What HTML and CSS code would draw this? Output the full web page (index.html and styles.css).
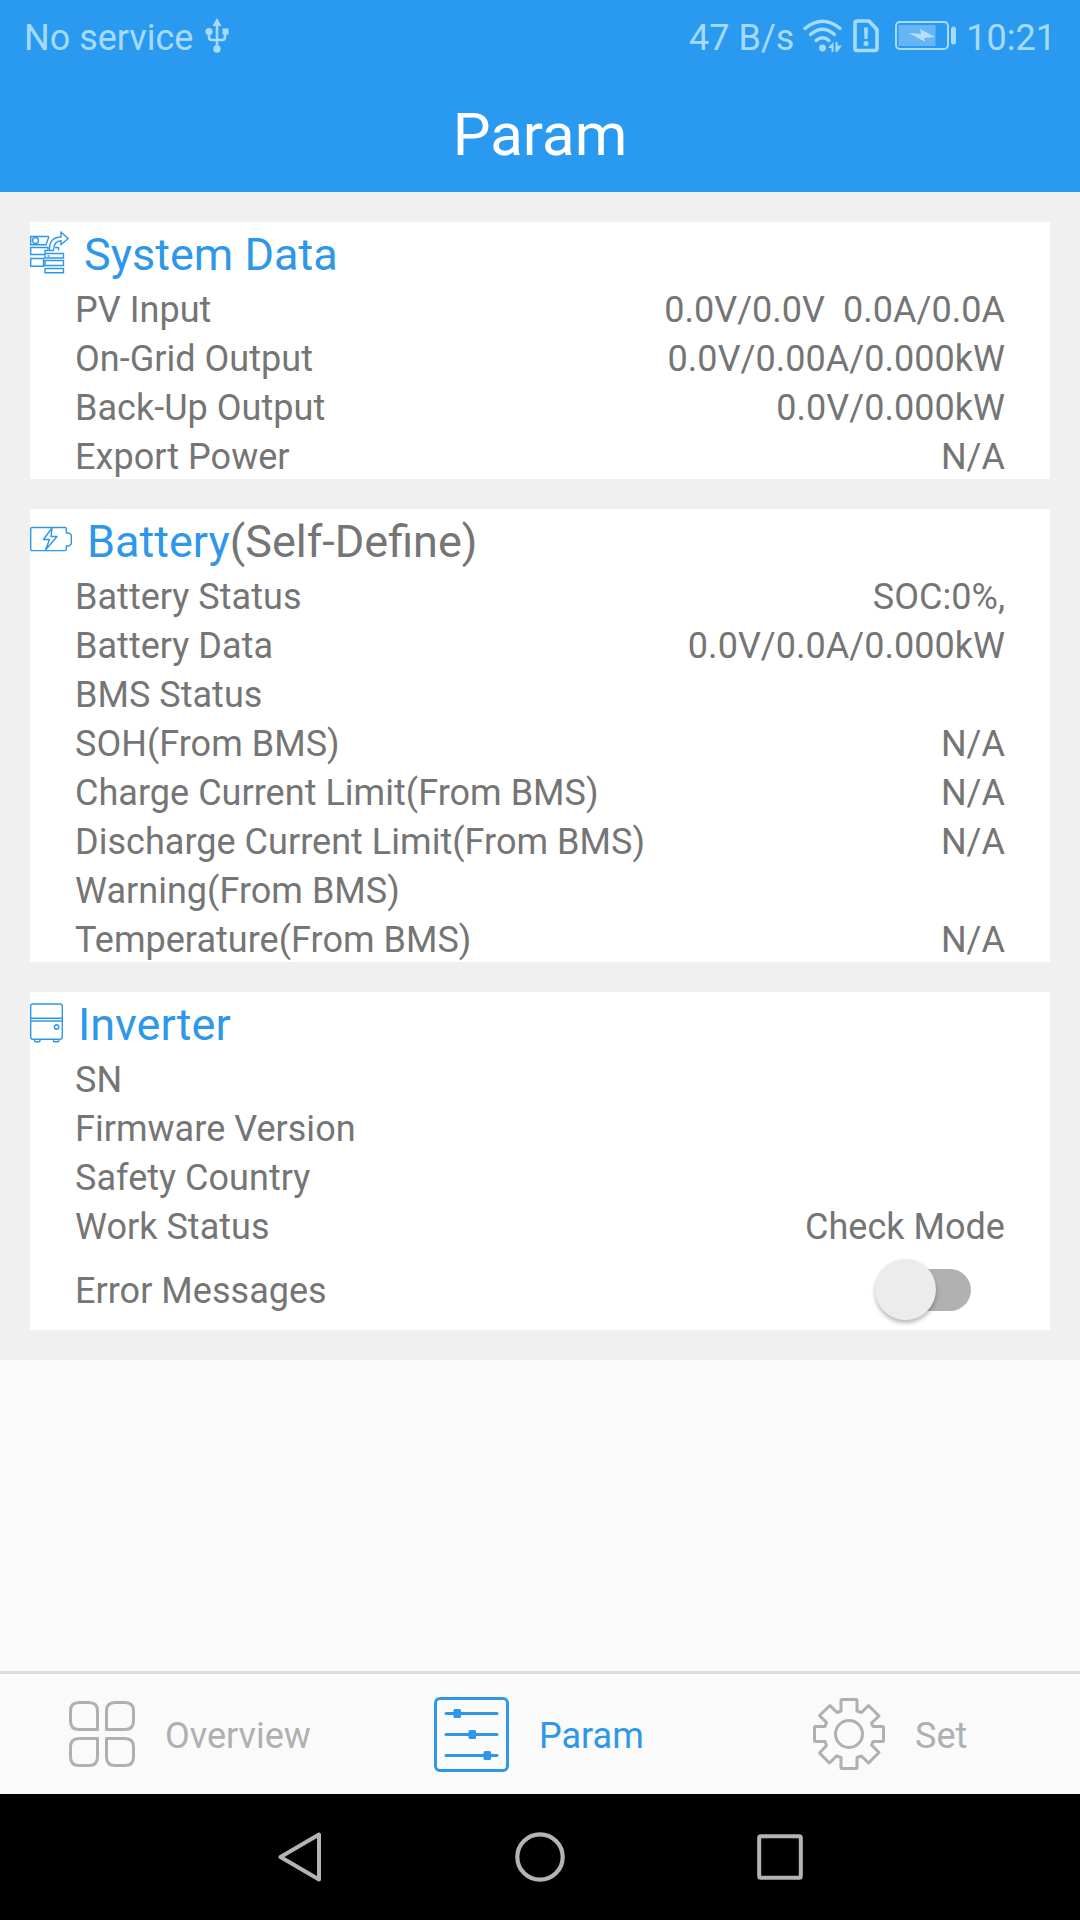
FILE: index.html
```html
<!DOCTYPE html>
<html lang="en">
<head>
  <meta charset="UTF-8" />
  <meta name="viewport" content="width=device-width, initial-scale=1.0"/>
  <title>Param</title>
  <link rel="stylesheet" href="styles.css">
</head>
<body>
  <header class="header">
    <div class="status">
      <span class="carrier">No service</span>
      <svg class="usb" width="24" height="36" viewBox="0 0 24 36">
        <path d="M12 5V31M4 14v5q0 3 3 3h10q3 0 3-3v-5" fill="none" stroke="currentColor" stroke-width="2.600"/>
        <path d="M12 0l4.500 8h-9z" fill="currentColor"/>
        <circle cx="4" cy="13.500" r="3.600" fill="currentColor"/>
        <rect x="17.500" y="10.500" width="6" height="6" fill="currentColor"/>
        <circle cx="12" cy="31" r="3.700" fill="currentColor"/>
      </svg>
      <span class="speed">47 B/s</span>
      <svg class="wifi" width="40" height="34" viewBox="0 0 40 34">
        <g fill="none" stroke="currentColor" stroke-width="3.400" stroke-linecap="round">
          <path d="M2 9.500Q19.500-5 37 9.500"/>
          <path d="M7.500 15.500Q19.500 5 31.500 15.500"/>
          <path d="M13 21.500Q19.500 16 26 21.500"/>
        </g>
        <circle cx="19.500" cy="29" r="3.400" fill="currentColor"/>
        <path d="M25 29l5.500-6v10h-2v-4zM32.500 23h2v3.500H39L34 33h-1.500z" fill="currentColor"/>
      </svg>
      <svg class="sim" width="26" height="34" viewBox="0 0 26 34">
        <path d="M4 2h12l8 8.500V29.500q0 2-2 2H4q-2 0-2-2V4q0-2 2-2z" fill="none" stroke="currentColor" stroke-width="3.600" stroke-linejoin="round"/>
        <path d="M11 8.500h4L14.500 20h-3z" fill="currentColor"/>
        <circle cx="13" cy="24.500" r="2.500" fill="currentColor"/>
      </svg>
      <svg class="charge" width="62" height="30" viewBox="0 0 62 30">
        <rect x="1" y="1" width="52" height="27" rx="4" fill="none" stroke="currentColor" stroke-width="2"/>
        <rect x="3.500" y="4" width="37" height="21" fill="#67b5f5"/>
        <path d="M14 12l12 1-1-5 15 8-11 1 1 4z" fill="#b4e0ff"/>
        <rect x="56" y="5.500" width="5" height="18" rx="2.500" fill="currentColor"/>
      </svg>
      <span>10:21</span>
    </div>
    <h1>Param</h1>
  </header>

  <main class="content">
    <section class="card">
      <h2>
        <svg width="39" height="43" viewBox="0 0 39 43" fill="none" stroke="currentColor" stroke-width="1.400">
          <path d="M19 5.500H.7v8.300H16l3-8.300M.7 16.500H18v3h-3v4H.7zM.7 27.500h12.800v7.700H.7zM15 22.500h18.500V27H15zM15 29.500h18.500v5H15zM15 37.500h18.500v4.300H15z"/>
          <circle cx="5.500" cy="9.500" r="3"/>
          <path d="M19.500 19.500q-1-13 11.500-13.500V1.200l7.300 6.300L31 13.500V9.800q-7 0-7.500 9.700zM25 16.500h3.500v3M17.500 25h2"/>
        </svg>
        <span>System Data</span>
      </h2>
      <div class="row"><span>PV Input</span><span class="val">0.0V/0.0V&nbsp; 0.0A/0.0A</span></div>
      <div class="row"><span>On-Grid Output</span><span class="val">0.0V/0.00A/0.000kW</span></div>
      <div class="row"><span>Back-Up Output</span><span class="val">0.0V/0.000kW</span></div>
      <div class="row"><span>Export Power</span><span class="val">N/A</span></div>
    </section>

    <section class="card">
      <h2>
        <svg width="42" height="43" viewBox="0 0 42 43" fill="none" stroke="currentColor" stroke-width="1.400" stroke-linejoin="round">
          <path d="M2 9.500h33q1.300 0 1.300 1.300V15H39l2.300 2v9L39 28h-2.700v3.300q0 1.300-1.300 1.300H2q-1.300 0-1.300-1.300V10.800Q.7 9.500 2 9.500z"/>
          <path d="M22 10L13.500 21.500h6L15.500 32 27 18.500h-6z"/>
        </svg>
        <span>Battery<span class="sub">(Self-Define)</span></span>
      </h2>
      <div class="row"><span>Battery Status</span><span class="val">SOC:0%,</span></div>
      <div class="row"><span>Battery Data</span><span class="val">0.0V/0.0A/0.000kW</span></div>
      <div class="row"><span>BMS Status</span></div>
      <div class="row"><span>SOH(From BMS)</span><span class="val">N/A</span></div>
      <div class="row"><span>Charge Current Limit(From BMS)</span><span class="val">N/A</span></div>
      <div class="row"><span>Discharge Current Limit(From BMS)</span><span class="val">N/A</span></div>
      <div class="row"><span>Warning(From BMS)</span></div>
      <div class="row"><span>Temperature(From BMS)</span><span class="val">N/A</span></div>
    </section>

    <section class="card">
      <h2>
        <svg width="33" height="43" viewBox="0 -1 33 43" fill="none" stroke="currentColor" stroke-width="1.400">
          <path d="M3 2h27q2.300 0 2.300 2.300V35q0 2.300-2.300 2.300H3Q.7 37.300.7 35V4.300Q.7 2 3 2zM.7 16.300h31.600M.7 19h31.600M4.500 37.300v1.400q0 1 1 1H9q1 0 1-1v-1.400M23.500 37.300v1.400q0 1 1 1H28q1 0 1-1v-1.400"/>
          <circle cx="26.600" cy="25" r="2.200"/>
        </svg>
        <span>Inverter</span>
      </h2>
      <div class="row"><span>SN</span></div>
      <div class="row"><span>Firmware Version</span></div>
      <div class="row"><span>Safety Country</span></div>
      <div class="row"><span>Work Status</span><span class="val">Check Mode</span></div>
      <div class="row row-switch"><span>Error Messages</span><span class="switch"><span class="thumb"></span></span></div>
    </section>
  </main>

  <nav class="tabs">
    <a class="tab overview">
      <svg width="66" height="66" viewBox="0 0 66 66" fill="none" stroke="currentColor" stroke-width="3">
        <path d="M10 1.500h10q8.500 0 8.500 8.500v18.500H10q-8.500 0-8.500-8.500V10q0-8.500 8.500-8.500z" stroke-linejoin="round"/>
        <path d="M46 1.500h10q8.500 0 8.500 8.500v10q0 8.500-8.500 8.500H37.500V10q0-8.500 8.500-8.500z" stroke-linejoin="round"/>
        <path d="M10 37.500h18.500V56q0 8.500-8.500 8.500H10q-8.500 0-8.500-8.500V46q0-8.500 8.500-8.500z" stroke-linejoin="round"/>
        <path d="M37.500 37.500H56q8.500 0 8.500 8.500v10q0 8.500-8.500 8.500H46q-8.500 0-8.500-8.500z" stroke-linejoin="round"/>
      </svg>
      <span>Overview</span>
    </a>
    <a class="tab param active">
      <svg width="75" height="75" viewBox="0 0 75 75" fill="none" stroke="currentColor" stroke-width="3">
        <rect x="1.500" y="1.500" width="72" height="72" rx="4.500"/>
        <path d="M12 16.500h51M12 37.500h51M12 58.500h51" stroke-linecap="round"/>
        <g fill="currentColor" stroke="none">
          <rect x="19.500" y="12" width="7.500" height="9" rx="1.500"/>
          <rect x="34.500" y="33" width="7.500" height="9" rx="1.500"/>
          <rect x="49.500" y="54" width="7.500" height="9" rx="1.500"/>
        </g>
      </svg>
      <span>Param</span>
    </a>
    <a class="tab set">
      <svg width="72" height="72" viewBox="0 0 72 72" fill="none" stroke="currentColor" stroke-width="3" stroke-linejoin="round">
        <path d="M29 1.500H43q1 0 1 1V13l4.500 1.500 7-7L66 18 58.500 25 60 28.500H69.500q1 0 1 1V42.500q0 1-1 1H60L58.500 47 66 54.500 55.500 65 48.500 58 44 59.500V69.500q0 1-1 1H29q-1 0-1-1V59.500L23.500 58 16.500 65 6.500 55 13.500 47.500 12 43.500H2.500q-1 0-1-1V29.500q0-1 1-1H12L13.500 24.500 6.500 17.500 17 7.500 24 14.500 28 13V2.500q0-1 1-1z"/>
        <circle cx="36" cy="36" r="13.500"/>
      </svg>
      <span>Set</span>
    </a>
  </nav>

  <footer class="navbar">
    <svg width="44" height="50" viewBox="0 0 44 50" fill="none" stroke="currentColor" stroke-width="4" stroke-linejoin="round">
      <path d="M41 2.500v45L2.500 25z"/>
    </svg>
    <svg width="50" height="50" viewBox="0 0 50 50" fill="none" stroke="currentColor" stroke-width="4.200">
      <circle cx="25" cy="25" r="22.700"/>
    </svg>
    <svg width="46" height="46" viewBox="0 0 46 46" fill="none" stroke="currentColor" stroke-width="4">
      <rect x="2.200" y="2.200" width="41.600" height="41.600" rx="1.500"/>
    </svg>
  </footer>
</body>
</html>
```
FILE: styles.css
```css
* { margin: 0; padding: 0; box-sizing: border-box; }
body {
  font-family: Roboto, sans-serif;
  font-size: 36px;
  background: #fafafa;
  color: #757575;
  width: 1080px;
  height: 1920px;
  display: flex;
  flex-direction: column;
  overflow: hidden;
}
svg { display: block; flex: none; }
.header { height: 192px; background: #2a9af0; color: #fff; }
.status {
  height: 72px;
  padding: 0 24px 0 24px;
  display: flex;
  align-items: center;
  color: #a6dbff;
  white-space: nowrap;
}
.status span { padding-top: 4px; }
.usb { margin-left: 12px; }
.speed { margin-left: auto; }
.wifi { margin-left: 9px; }
.sim { margin-left: 10px; }
.charge { margin: 0 9px 0 16px; }
h1 {
  font-size: 60px;
  font-weight: 400;
  line-height: 126px;
  text-align: center;
}
.content {
  background: #f0f0f0;
  padding: 30px;
  display: flex;
  flex-direction: column;
  gap: 30px;
}
.card { background: #fff; }
h2 {
  height: 61px;
  padding-top: 4px;
  display: flex;
  gap: 15px;
  font-size: 45px;
  font-weight: 400;
  line-height: 57px;
  color: #2f97ea;
}
h2 svg { margin-top: 5px; }
.sub { color: #757575; }
.row {
  height: 49px;
  padding: 5px 45px 0;
  display: flex;
  justify-content: space-between;
  line-height: 45px;
  letter-spacing: 0.03px;
  white-space: nowrap;
}
.row-switch { height: 81px; align-items: center; padding-top: 3px; }
.switch {
  width: 88px;
  height: 42px;
  margin: -3px 34px 0 0;
  border-radius: 21px;
  background: #b1b1b1;
  display: flex;
  align-items: center;
}
.thumb {
  width: 61px;
  height: 61px;
  flex: none;
  margin-left: -8px;
  border-radius: 50%;
  background: #ececec;
  box-shadow: 0 3px 4px rgba(0, 0, 0, 0.28);
}
.tabs {
  height: 123px;
  margin-top: auto;
  border-top: 3px solid #dcdcdc;
  display: flex;
  color: #b0b0b0;
}
.tab { width: 360px; display: flex; align-items: center; }
.tab span { padding-top: 3px; }
.overview { padding-left: 69px; gap: 30px; }
.param { padding-left: 74px; gap: 30px; }
.set { padding-left: 93px; gap: 30px; }
.active { color: #2f97ea; }
.navbar {
  height: 126px;
  padding: 0 277px 0 278px;
  background: #000;
  color: #b4b4b4;
  display: flex;
  align-items: center;
  justify-content: space-between;
}
```
